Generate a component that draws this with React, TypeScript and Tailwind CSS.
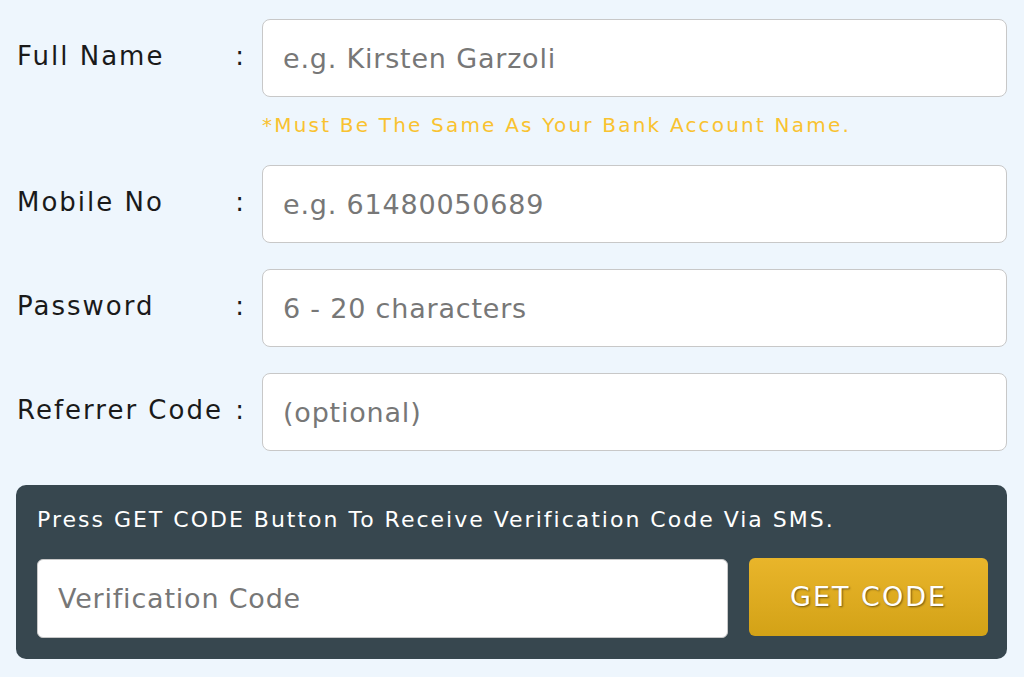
import React from "react"

const font = { fontFamily: '"DejaVu Sans", "Noto Sans", sans-serif' }

function Row({ label, placeholder, hint }: { label: string; placeholder: string; hint?: string }) {
  return (
    <div className="flex items-start">
      <div className="flex w-[262px] shrink-0 items-center justify-between pl-[17px] pr-[16px] h-[74px] text-[26px] tracking-[2px] text-[#1a1a1a]">
        <span>{label}</span>
        <span>:</span>
      </div>
      <div className="flex-1 pr-[17px]">
        <input
          placeholder={placeholder}
          className="h-[78px] w-full rounded-[8px] border border-[#c8c8c8] bg-white px-[20px] text-[27px] tracking-[0.8px] text-[#333] placeholder:text-[#777] outline-none"
          style={font}
        />
        {hint && <p className="mt-[13px] text-[20px] tracking-[2.2px] text-[#f9c230]">{hint}</p>}
      </div>
    </div>
  )
}

export default function App() {
  return (
    <div className="min-h-[677px] w-[1024px] bg-[#eef6fd] pt-[19px]" style={font}>
      <div className="flex flex-col">
        <Row label="Full Name" placeholder="e.g. Kirsten Garzoli" hint="*Must Be The Same As Your Bank Account Name." />
        <div className="mt-[25px]">
          <Row label="Mobile No" placeholder="e.g. 61480050689" />
        </div>
        <div className="mt-[26px]">
          <Row label="Password" placeholder="6 - 20 characters" />
        </div>
        <div className="mt-[26px]">
          <Row label="Referrer Code" placeholder="(optional)" />
        </div>
      </div>

      <div className="mx-[16px] mt-[34px] w-[991px] rounded-[10px] bg-[#37474f] pl-[21px] pr-[19px] pt-[21px] pb-[21px]">
        <p className="text-[22px] leading-[28px] tracking-[2px] text-white">Press GET CODE Button To Receive Verification Code Via SMS.</p>
        <div className="mt-[25px] flex items-start gap-[21px]">
          <input
            placeholder="Verification Code"
            className="h-[79px] flex-1 rounded-[6px] border border-[#c8c8c8] bg-white px-[20px] text-[27px] tracking-[0.8px] placeholder:text-[#777] outline-none"
            style={font}
          />
          <button className="-mt-px h-[78px] w-[239px] rounded-[6px] bg-gradient-to-b from-[#e9b52a] to-[#d3a216] text-[27px] tracking-[2px] text-white [text-shadow:1px_1px_2px_rgba(0,0,0,0.5)]">
            GET CODE
          </button>
        </div>
      </div>
    </div>
  )
}
